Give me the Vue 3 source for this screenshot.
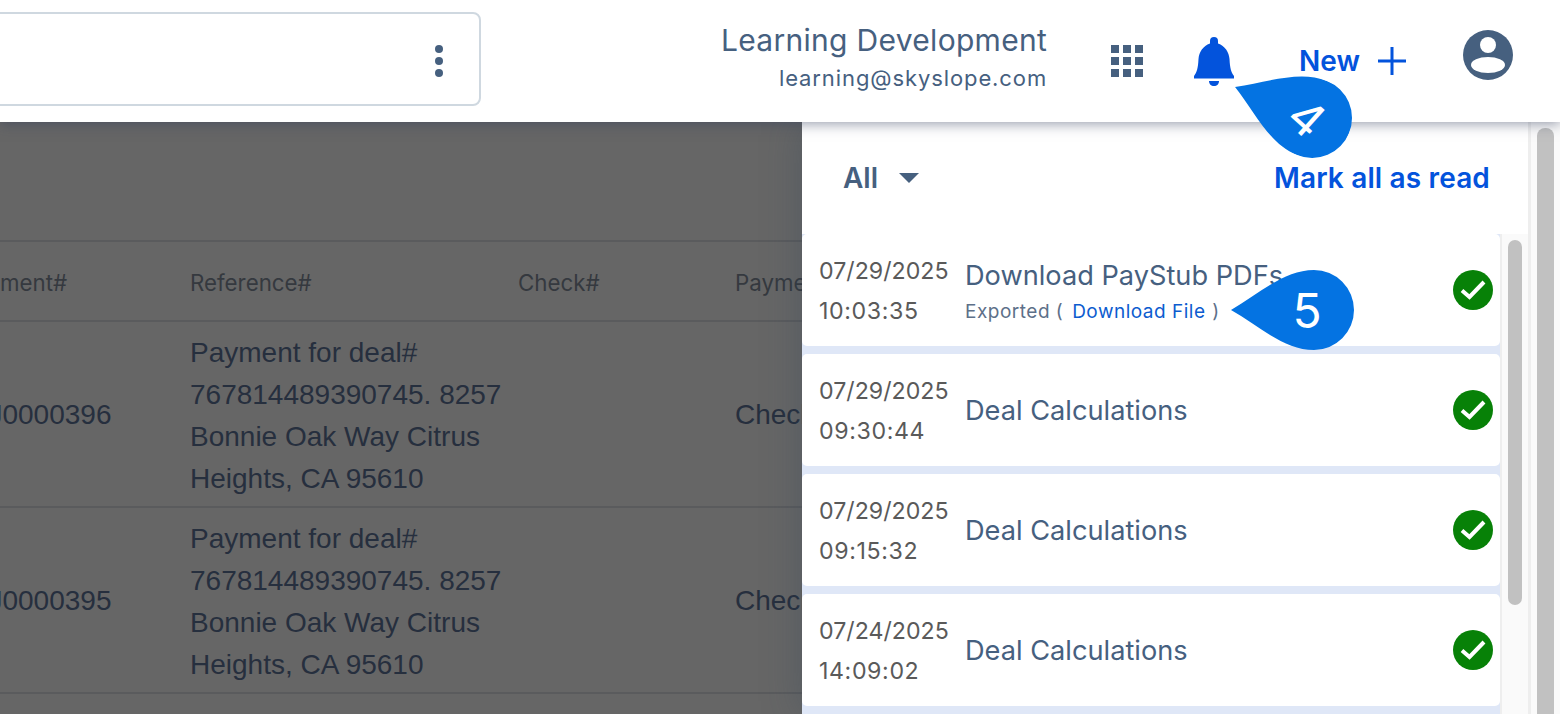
<template>
  <div class="page">
    <header class="topbar">
      <div class="search-box">
        <span class="dots"><i></i><i></i><i></i></span>
      </div>
      <div class="account">
        <div class="account-name">Learning Development</div>
        <div class="account-mail">learning@skyslope.com</div>
      </div>
      <svg class="grid-icon" width="34" height="34" viewBox="0 0 34 34" fill="#46607f">
        <template v-for="row in [1, 13, 25]" :key="row">
          <rect v-for="col in [1, 13, 25]" :key="col" :x="col" :y="row" width="8" height="8" />
        </template>
      </svg>
      <svg class="bell-icon" width="40" height="50" viewBox="0 0 40 50" fill="#0353dc">
        <path d="M20 0a4 4 0 0 1 4 4v2.5C31 9 35 15 35.5 22c.5 9 1.5 13 4.5 17v2.5H0V39c3-4 4-8 4.5-17C5 15 9 9 16 6.5V4a4 4 0 0 1 4-4z" />
        <path d="M15 44h10c0 3-2 5-5 5s-5-2-5-5z" />
      </svg>
      <div class="new-btn">
        <span>New</span>
        <svg width="28" height="28" viewBox="0 0 28 28" stroke="#0353dc" stroke-width="3" fill="none">
          <path d="M14 0v28M0 14h28" />
        </svg>
      </div>
      <svg class="user-icon" width="50" height="50" viewBox="0 0 50 50">
        <circle cx="25" cy="25" r="25" fill="#46607f" />
        <circle cx="25" cy="15" r="8" fill="#fff" />
        <ellipse cx="25" cy="35" rx="17" ry="8" fill="#fff" />
      </svg>
    </header>

    <main class="content">
      <section class="backdrop">
        <div class="table">
          <div class="row head">
            <div>Payment#</div>
            <div>Reference#</div>
            <div>Check#</div>
            <div>Payment</div>
          </div>
          <div v-for="pay in payments" :key="pay.id" class="row">
            <div>{{ pay.id }}</div>
            <div>Payment for deal# 767814489390745. 8257 Bonnie Oak Way Citrus Heights, CA 95610</div>
            <div></div>
            <div>Check</div>
          </div>
        </div>
      </section>

      <aside class="panel">
        <div class="panel-main">
          <div class="panel-head">
            <div class="filter">All <span class="caret"></span></div>
            <div class="mark-read">Mark all as read</div>
          </div>
          <div class="list-wrap">
            <ul class="list">
              <li v-for="item in items" :key="item.time" class="card">
                <div class="stamp">
                  <div>{{ item.date }}</div>
                  <div class="time">{{ item.time }}</div>
                </div>
                <div class="info">
                  <div class="title">{{ item.title }}</div>
                  <div v-if="item.file" class="sub">Exported ( <span class="link">Download File</span> )</div>
                </div>
                <svg class="ok" width="40" height="40" viewBox="0 0 40 40">
                  <circle cx="20" cy="20" r="20" fill="#078107" />
                  <path d="M9 20.5l7.5 6.5L31 12" fill="none" stroke="#fff" stroke-width="4" />
                </svg>
              </li>
            </ul>
            <div class="scroll inner"><span class="thumb"></span></div>
          </div>
        </div>
        <div class="scroll outer"><span class="thumb"></span></div>
      </aside>
    </main>

    <!-- walkthrough callouts -->
    <div class="callout step-4">
      <svg width="124" height="80" viewBox="-84 -40 124 80"><path :d="dropPath" fill="#0473e2" /></svg>
      <span class="callout-num">4</span>
    </div>
    <div class="callout step-5">
      <svg width="124" height="80" viewBox="-84 -40 124 80"><path :d="dropPath" fill="#0473e2" /></svg>
      <span class="callout-num">5</span>
    </div>
  </div>
</template>

<script setup>
const dropPath = 'M-83 0C-55-16-30-40 0-40A40 40 0 0 1 0 40C-30 40-55 16-83 0Z'

const payments = [{ id: 'PIJ0000396' }, { id: 'PIJ0000395' }, { id: 'PIJ0000394' }]

const items = [
  { date: '07/29/2025', time: '10:03:35', title: 'Download PayStub PDFs', file: true },
  { date: '07/29/2025', time: '09:30:44', title: 'Deal Calculations' },
  { date: '07/29/2025', time: '09:15:32', title: 'Deal Calculations' },
  { date: '07/24/2025', time: '14:09:02', title: 'Deal Calculations' },
]
</script>

<style scoped>
.page {
  position: relative;
  width: 1560px;
  height: 714px;
  overflow: hidden;
  display: flex;
  flex-direction: column;
  font-family: Inter, "Liberation Sans", sans-serif;
  background: #666;
}

.topbar {
  position: relative;
  z-index: 2;
  flex: 0 0 122px;
  display: flex;
  align-items: center;
  background: #fff;
  box-shadow: 0 2px 12px rgba(50, 60, 90, 0.5);
}

.search-box {
  width: 501px;
  height: 94px;
  margin-left: -20px;
  margin-top: -5px;
  box-sizing: border-box;
  border: 2px solid #cfd8e0;
  border-radius: 8px;
  display: flex;
  align-items: center;
  justify-content: flex-end;
  padding-right: 36px;
}
.dots {
  display: flex;
  flex-direction: column;
  gap: 4px;
  margin-top: 4px;
}
.dots i {
  width: 8px;
  height: 8px;
  border-radius: 50%;
  background: #46607f;
}

.account {
  margin-left: auto;
  margin-top: -7px;
  text-align: right;
  color: #46607f;
}
.account-name {
  font-size: 30px;
  line-height: 40px;
  letter-spacing: 0.3px;
}
.account-mail {
  font-size: 22px;
  line-height: 36px;
  letter-spacing: 0.9px;
}
.grid-icon {
  margin-left: 63px;
}
.bell-icon {
  margin-left: 50px;
  margin-top: 2px;
}
.new-btn {
  display: flex;
  align-items: center;
  gap: 18px;
  margin-left: 65px;
  color: #0353dc;
  font-size: 28px;
  font-weight: 600;
}
.user-icon {
  margin-left: 57px;
  margin-right: 47px;
  margin-top: -12px;
}

.content {
  flex: 1;
  min-height: 0;
  display: flex;
}

.backdrop {
  flex: 0 0 802px;
  overflow: hidden;
  padding-top: 118px;
  background: #666;
  color: #262f3e;
}
.table {
  margin-left: -37px;
  width: 1000px;
  border-top: 2px solid #5a5b5d;
}
.row {
  display: grid;
  grid-template-columns: 227px 328px 217px 1fr;
  align-items: center;
  height: 182px;
  padding-top: 2px;
  border-bottom: 2px solid #5a5b5d;
  font-family: "Liberation Sans", sans-serif;
  font-size: 28px;
  line-height: 42px;
}
.row > div:first-child {
  margin-left: -1px;
}
.row > div:nth-child(2) {
  width: 320px;
  padding-top: 2px;
}
.row.head {
  height: 75px;
  padding-top: 3px;
  font-family: Inter, sans-serif;
  font-size: 22.3px;
  line-height: 30px;
  color: #35393f;
}
.row.head > div:first-child {
  margin-left: -2px;
}
.row.head > div:nth-child(2) {
  padding-top: 0;
}

.panel {
  position: relative;
  z-index: 1;
  flex: 1;
  display: flex;
  background: #fff;
  box-shadow: 0 0 36px rgba(50, 70, 90, 0.35);
}
.panel-main {
  width: 729px;
  box-sizing: border-box;
  border-right: 3px solid #eee;
}
.panel-head {
  height: 112px;
  box-sizing: border-box;
  padding: 0 38px 0 41px;
  display: flex;
  justify-content: space-between;
  align-items: center;
}
.filter {
  display: flex;
  align-items: center;
  gap: 21px;
  color: #46607f;
  font-size: 28px;
  font-weight: 600;
}
.caret {
  width: 0;
  height: 0;
  border-left: 10px solid transparent;
  border-right: 10px solid transparent;
  border-top: 10px solid #46607f;
}
.mark-read {
  color: #0353dc;
  font-size: 28px;
  font-weight: 600;
  letter-spacing: 0.15px;
}
.list-wrap {
  display: flex;
}
.list {
  width: 698px;
  margin: 0;
  padding: 0 0 8px;
  list-style: none;
  background: #dfe7f7;
  display: flex;
  flex-direction: column;
  gap: 8px;
}
.card {
  height: 112px;
  flex: none;
  box-sizing: border-box;
  padding: 2px 7px 0 17px;
  display: flex;
  align-items: center;
  background: #fff;
  border-radius: 5px;
}
.stamp {
  width: 146px;
  flex: none;
  color: #5a5a5a;
  font-size: 23.2px;
  line-height: 40px;
}
.time {
  letter-spacing: 0.6px;
}
.info {
  flex: 1;
  min-width: 0;
}
.title {
  color: #46607f;
  font-size: 27.2px;
  line-height: 40px;
}
.sub {
  margin-top: 1px;
  color: #5d7089;
  font-size: 19px;
  line-height: 30px;
  letter-spacing: 0.5px;
}
.link {
  margin: 0 1px 0 3px;
  color: #0d5ccf;
}
.ok {
  flex: none;
  margin-top: -2px;
}

.scroll {
  box-sizing: border-box;
  background: #fafafa;
  flex: 1;
}
.scroll.inner {
  border-left: 2px solid #eee;
  padding: 6px 6px 0;
}
.scroll.inner .thumb {
  height: 365px;
}
.scroll.outer {
  padding: 6px 6px 0;
}
.scroll.outer .thumb {
  height: 700px;
}
.thumb {
  display: block;
  background: #c1c1c1;
  border-radius: 8px;
}

.callout {
  position: absolute;
  z-index: 3;
  width: 124px;
  height: 80px;
}
.callout svg {
  display: block;
}
.callout-num {
  position: absolute;
  left: 77px;
  top: 41px;
  transform: translate(-50%, -50%);
  color: #fff;
  font-size: 48px;
  line-height: 1;
}
.step-5 {
  left: 1230px;
  top: 270px;
}
.step-4 {
  left: 1228px;
  top: 78px;
  transform: rotate(22deg);
  transform-origin: 84px 40px;
}
.step-4 .callout-num {
  left: 79px;
  top: 42px;
  transform: translate(-50%, -50%) rotate(20deg);
}
</style>

<style>
html,
body {
  margin: 0;
  overflow: hidden;
}
</style>
